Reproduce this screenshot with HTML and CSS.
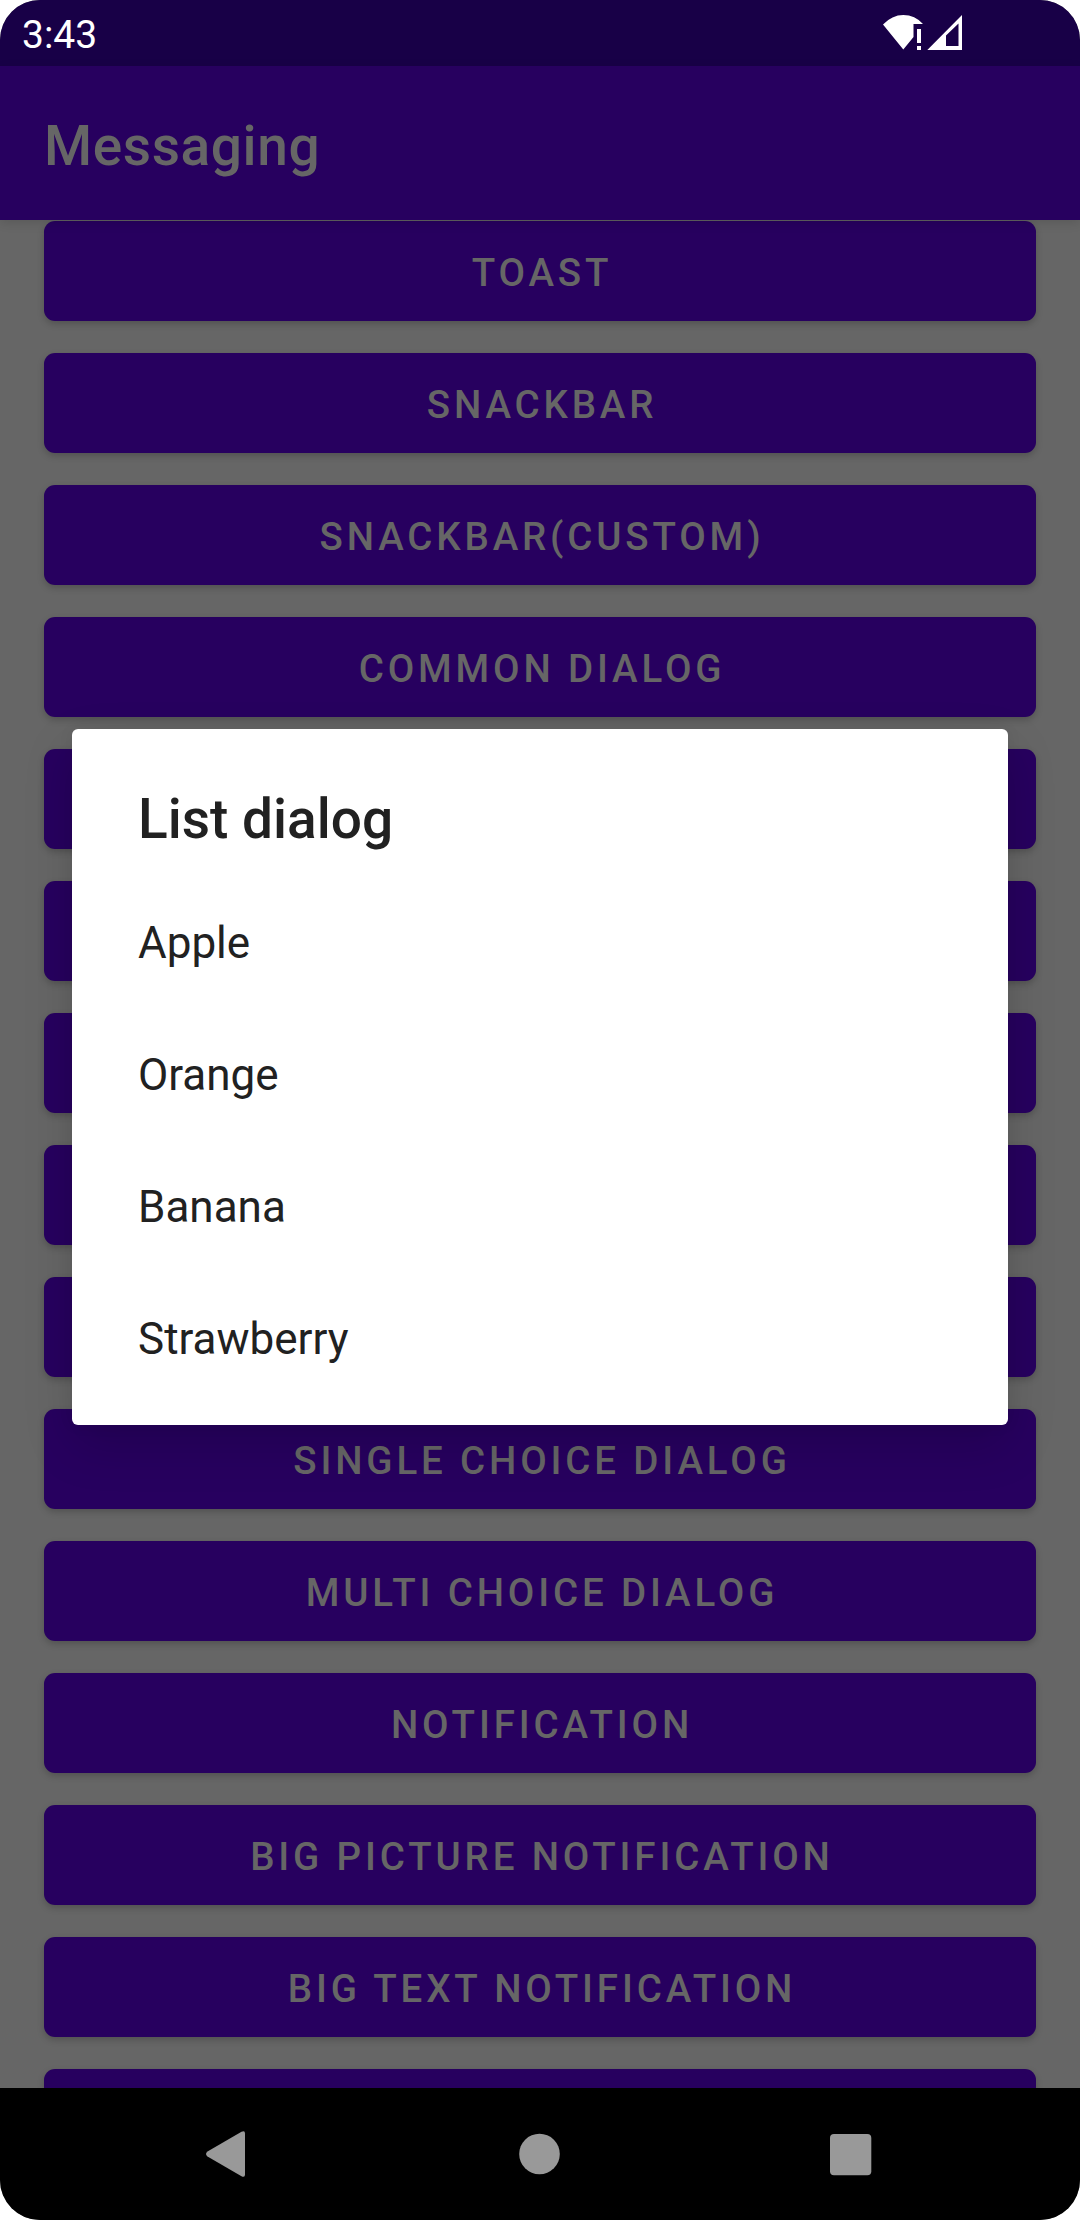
FILE: index.html
```html
<!DOCTYPE html>
<html lang="en">
<head>
<meta charset="utf-8">
<title>Messaging</title>
<link rel="stylesheet" href="styles.css">
</head>
<body>
<div class="screen">
  <header class="status-bar">
    <span class="clock">3:43</span>
    <svg class="status-icons" width="80" height="36" viewBox="0 0 80 36">
      <path fill="#fff" d="M0 9.500Q9 0 20.300 0Q32 0 40 9H30.500V22L20.300 34.500Z"/>
      <path fill="#fff" d="M34 14h4v14h-4zM34 31h4v4h-4z"/>
      <path fill="#fff" fill-rule="evenodd" d="M44.300 35L79 0V35ZM63 20.500V31H75.500V8.500Z"/>
    </svg>
  </header>
  <div class="app-bar"><h1 class="app-title">Messaging</h1></div>
  <main class="button-list">
    <button class="button">TOAST</button>
    <button class="button">SNACKBAR</button>
    <button class="button">SNACKBAR(CUSTOM)</button>
    <button class="button">COMMON DIALOG</button>
    <button class="button"></button>
    <button class="button"></button>
    <button class="button"></button>
    <button class="button"></button>
    <button class="button"></button>
    <button class="button">SINGLE CHOICE DIALOG</button>
    <button class="button">MULTI CHOICE DIALOG</button>
    <button class="button">NOTIFICATION</button>
    <button class="button">BIG PICTURE NOTIFICATION</button>
    <button class="button">BIG TEXT NOTIFICATION</button>
    <button class="button"></button>
  </main>
  <nav class="nav-bar">
    <svg class="nav-icon" width="44" height="48" viewBox="0 0 44 48"><path fill="#999" d="M3.500 21.500L37.500 1.800Q41 0 41 3.500V44.500Q41 48 37.500 46.200L3.500 26.500Q.500 24 3.500 21.500Z"/></svg>
    <svg class="nav-icon" width="44" height="48" viewBox="0 0 44 48"><circle fill="#999" cx="23.500" cy="24" r="20.300"/></svg>
    <svg class="nav-icon" width="44" height="48" viewBox="0 0 44 48"><rect fill="#999" x="2" y="4" width="41.300" height="41.300" rx="4"/></svg>
  </nav>
  <section class="dialog" role="dialog">
    <h2 class="dialog-title">List dialog</h2>
    <ul class="dialog-list">
      <li class="dialog-item">Apple</li>
      <li class="dialog-item">Orange</li>
      <li class="dialog-item">Banana</li>
      <li class="dialog-item">Strawberry</li>
    </ul>
  </section>
</div>
</body>
</html>
```
FILE: styles.css
```css
* { box-sizing: border-box; }

body {
  margin: 0;
  background: #fff;
  font-family: Roboto, sans-serif;
}

.screen {
  position: relative;
  display: flex;
  flex-direction: column;
  width: 1080px;
  height: 2220px;
  overflow: hidden;
  border-radius: 40px;
  background: #666;
}

.status-bar {
  display: flex;
  flex: none;
  justify-content: space-between;
  height: 66px;
  padding: 15px 117px 0 22px;
  background: #180047;
}

.clock {
  color: #fff;
  font-size: 39px;
  line-height: 40px;
}

.app-bar {
  position: relative;
  display: flex;
  flex: none;
  align-items: center;
  height: 154px;
  padding: 5px 44px 0;
  background: #27005f;
  box-shadow: 0 3px 10px rgba(0, 0, 0, 0.12);
}

.app-title {
  margin: 0;
  color: #666;
  font-size: 55px;
  font-weight: 500;
  letter-spacing: 0.6px;
  line-height: 64px;
}

.button-list {
  display: flex;
  flex: 1;
  flex-direction: column;
  gap: 32px;
  min-height: 0;
  padding: 1px 44px 0;
  overflow: hidden;
}

.button {
  flex: none;
  height: 100px;
  padding: 4px 0 0 4px;
  border: 0;
  border-radius: 11px;
  background: #27005f;
  box-shadow: 0 3px 7px rgba(0, 0, 0, 0.2);
  color: #666;
  font: 500 38.5px/46px Roboto, sans-serif;
  letter-spacing: 3.85px;
}

.nav-bar {
  display: flex;
  flex: none;
  justify-content: space-between;
  height: 132px;
  padding: 42px 208px 0 204px;
  background: #000;
}

.dialog {
  position: absolute;
  top: 729px;
  left: 72px;
  width: 936px;
  height: 696px;
  padding: 58px 66px 0;
  border-radius: 6px;
  background: #fff;
  box-shadow: 0 20px 50px rgba(0, 0, 0, 0.15), 0 0 16px rgba(0, 0, 0, 0.06);
  color: #212121;
}

.dialog-title {
  margin: 0;
  font-size: 55px;
  font-weight: 500;
  line-height: 64px;
}

.dialog-list {
  margin: 26px 0 0;
  padding: 0;
  list-style: none;
}

.dialog-item {
  height: 132px;
  font-size: 44px;
  line-height: 132px;
}
```
